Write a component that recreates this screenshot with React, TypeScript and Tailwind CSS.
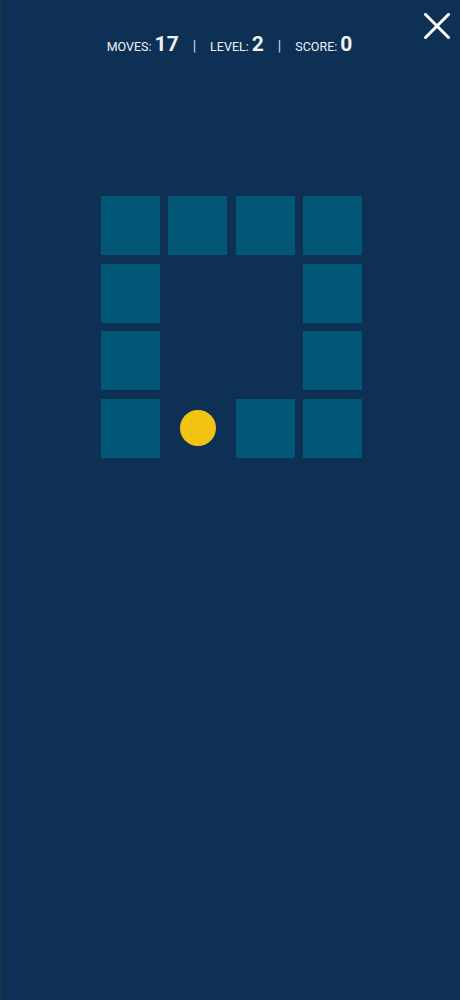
import React from "react";

// 4x4 board: 1 = block, 0 = empty, 2 = ball
const board = [
  [1, 1, 1, 1],
  [1, 0, 0, 1],
  [1, 0, 0, 1],
  [1, 2, 1, 1],
];

function Stat({ label, value }: { label: string; value: number }) {
  return (
    <div className="flex items-baseline">
      <span className="text-[12.5px] leading-none">{label}:</span>
      <span className="ml-[3px] text-[21px] font-bold leading-none">{value}</span>
    </div>
  );
}

export default function App() {
  return (
    <div
      className="relative min-h-[1000px] w-full bg-[#0e3055] text-[#eef2f6] border-l border-[#26333f]"
      style={{ fontFamily: "Roboto, 'Noto Sans', sans-serif" }}
    >
      <button className="absolute right-[10px] top-[13px] h-[26px] w-[26px]" aria-label="close">
        <svg viewBox="0 0 26 26" className="h-full w-full" fill="none" stroke="#ffffff" strokeWidth="3" strokeLinecap="square">
          <path d="M1.5 1.5 L24.5 24.5 M24.5 1.5 L1.5 24.5" />
        </svg>
      </button>

      <div className="flex justify-center pt-[34px]">
        <div className="flex items-baseline gap-[14px] pr-[2px]">
          <Stat label="MOVES" value={17} />
          <span className="text-[14px] leading-none text-[#d6dde6]">|</span>
          <Stat label="LEVEL" value={2} />
          <span className="text-[14px] leading-none text-[#d6dde6]">|</span>
          <Stat label="SCORE" value={0} />
        </div>
      </div>

      <div className="mt-[141px] flex justify-center">
        <div className="ml-[2px] grid grid-cols-[repeat(4,59px)] grid-rows-[repeat(4,59px)] gap-x-[8.5px] gap-y-[8.5px]">
          {board.flat().map((cell, i) => (
            <div key={i} className={`flex items-center justify-center ${cell === 1 ? "bg-[#025676]" : ""}`}>
              {cell === 2 && <div className="h-[36px] w-[36px] rounded-full bg-[#f1c414]" />}
            </div>
          ))}
        </div>
      </div>
    </div>
  );
}
